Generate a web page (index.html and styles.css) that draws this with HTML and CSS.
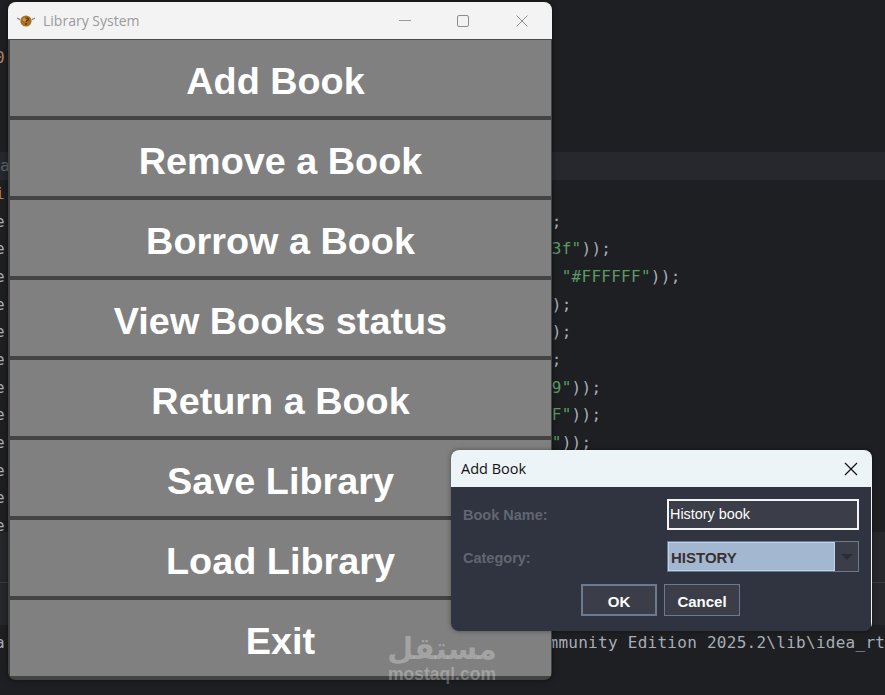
FILE: index.html
```html
<!DOCTYPE html>
<html lang="en">
<head>
<meta charset="utf-8">
<title>Library System</title>
<link rel="stylesheet" href="styles.css">
</head>
<body>
<div class="desktop">
  <div class="ide">
    <div class="editor">
      <div class="line"></div>
      <div class="line"></div>
      <div class="line"><span class="lead orange low">0</span></div>
      <div class="line"></div>
      <div class="line"></div>
      <div class="line"></div>
      <div class="line current"><span class="lead dim">a</span></div>
      <div class="line"><span class="lead orange">i</span></div>
      <div class="line"><span class="lead">e</span><span class="tail">;</span></div>
      <div class="line"><span class="lead">e</span><span class="tail"><span class="green">3f"</span>));</span></div>
      <div class="line"><span class="lead">e</span><span class="tail"> <span class="green">"#FFFFFF"</span>));</span></div>
      <div class="line"><span class="lead">e</span><span class="tail">);</span></div>
      <div class="line"><span class="lead">e</span><span class="tail">);</span></div>
      <div class="line"><span class="lead">e</span><span class="tail">;</span></div>
      <div class="line"><span class="lead">e</span><span class="tail"><span class="green">9"</span>));</span></div>
      <div class="line"><span class="lead">e</span><span class="tail"><span class="green">F"</span>));</span></div>
      <div class="line"><span class="lead">e</span><span class="tail"><span class="green">"</span>));</span></div>
      <div class="line"><span class="lead">e</span></div>
      <div class="line"><span class="lead">e</span></div>
      <div class="line"><span class="lead">e</span></div>
    </div>
    <div class="tool-header"></div>
    <div class="terminal">
      <div class="line"><span class="lead term-lead">a</span><span class="tail">mmunity Edition 2025.2\lib\idea_rt</span></div>
    </div>
  </div>

  <section class="window">
    <header class="titlebar">
      <svg class="app-icon" width="18" height="12" viewBox="0 0 18 12" aria-hidden="true">
        <path d="M0 3l3.2 1.6M18 3l-3.2 1.6" stroke="#8a8a8a" stroke-width="1.2" fill="none"/>
        <circle cx="9" cy="6" r="5.6" fill="#a8701f"/>
        <circle cx="7.4" cy="4.6" r="1.8" fill="#d1973c"/>
        <path d="M8.5 3.2h2.8v2.2h-1.6v1.6" stroke="#5a3208" stroke-width="1" fill="none"/>
        <circle cx="9" cy="9" r=".9" fill="#5a3208"/>
      </svg>
      <span class="window-title">Library System</span>
      <div class="controls">
        <span class="control">
          <svg width="12" height="12" viewBox="0 0 12 12" aria-hidden="true"><path d="M0 5.5h12" stroke="#999" fill="none"/></svg>
        </span>
        <span class="control">
          <svg width="12" height="12" viewBox="0 0 12 12" aria-hidden="true"><rect x=".5" y=".5" width="11" height="11" rx="1.5" stroke="#8e8e8e" fill="none"/></svg>
        </span>
        <span class="control">
          <svg width="12" height="12" viewBox="0 0 12 12" aria-hidden="true"><path d="M.5.5l11 11M11.5.5l-11 11" stroke="#8e8e8e" fill="none"/></svg>
        </span>
      </div>
    </header>
    <div class="menu">
      <button class="menu-btn shifted">Add Book</button>
      <button class="menu-btn">Remove a Book</button>
      <button class="menu-btn">Borrow a Book</button>
      <button class="menu-btn">View Books status</button>
      <button class="menu-btn">Return a Book</button>
      <button class="menu-btn">Save Library</button>
      <button class="menu-btn">Load Library</button>
      <button class="menu-btn">Exit</button>
    </div>
  </section>

  <div class="watermark">
    <span class="wm-ar" lang="ar" dir="rtl">مستقل</span>
    <span class="wm-en">mostaql.com</span>
  </div>

  <section class="dialog">
    <header class="dialog-title">
      <span>Add Book</span>
      <svg width="14" height="14" viewBox="0 0 14 14" aria-hidden="true"><path d="M1 1l12 12M13 1L1 13" stroke="#111" stroke-width="1.2" fill="none"/></svg>
    </header>
    <div class="dialog-body">
      <div class="form">
        <label class="label">Book Name:</label>
        <div class="field">History book</div>
        <label class="label label-low">Category:</label>
        <div class="combo">
          <span class="combo-value">HISTORY</span>
          <span class="combo-arrow"><i class="triangle"></i></span>
        </div>
      </div>
      <div class="actions">
        <button class="dlg-btn default">OK</button>
        <button class="dlg-btn">Cancel</button>
      </div>
    </div>
  </section>
</div>
</body>
</html>
```
FILE: styles.css
```css
* { box-sizing: border-box; }
html, body { margin: 0; padding: 0; }
body { background: #1e1f22; }

.desktop {
  position: relative;
  width: 885px;
  height: 695px;
  overflow: hidden;
  background: #1e1f22;
}

/* IDE behind the windows */
.ide {
  display: flex;
  flex-direction: column;
  height: 100%;
  font: 16px/27.7px "DejaVu Sans Mono", monospace;
  letter-spacing: .27px;
  color: #a9adb6;
}
.editor { margin-top: -14px; height: 546px; flex: none; }
.line { display: flex; height: 27.7px; margin-left: -5px; white-space: pre; }
.line.current { background: #26282e; margin-left: 0; }
.lead { flex: none; width: 556.8px; }
.term-lead { width: 553.5px; }
.low { padding-top: 3px; }
.tail { flex: none; }
.orange { color: #b5825f; }
.dim { color: #5f636b; }
.green { color: #5d9a66; }
.tool-header {
  flex: none;
  height: 93px;
  background: linear-gradient(#25272b 50px, #393b40 50px, #393b40 51px, #25272b 51px);
}
.terminal { flex: 1; padding-top: 4px; overflow: hidden; }

/* Library System window */
.window {
  position: absolute;
  left: 8px;
  top: 2px;
  width: 544px;
  height: 678px;
  display: flex;
  flex-direction: column;
  background: #434343;
  border-radius: 8px;
  overflow: hidden;
  box-shadow: 0 0 6px rgba(0, 0, 0, .45);
}
.titlebar {
  flex: none;
  height: 38px;
  display: flex;
  align-items: center;
  padding-left: 9px;
  background: #f3f3f3;
  border-bottom: 1px solid #4a4a4a;
}
.app-icon { flex: none; }
.window-title {
  margin-left: 8px;
  font: 14px "Open Sans", sans-serif;
  color: #9a9a9a;
}
.controls { display: flex; margin-left: auto; padding-right: 1px; }
.control { display: flex; width: 58.5px; height: 37px; align-items: center; justify-content: center; }
.menu {
  flex: 1;
  display: flex;
  flex-direction: column;
  gap: 4px;
  padding: 0 1px 4px 2px;
}
.menu-btn {
  flex: none;
  height: 76px;
  padding: 6px 0 0;
  border: 0;
  background: #808080;
  color: #fff;
  font: bold 37.8px "Liberation Sans", Arial, sans-serif;
}
.menu-btn.shifted { padding-right: 10px; }

/* Watermark */
.watermark {
  position: absolute;
  left: 386px;
  top: 632px;
  width: 112px;
  display: flex;
  flex-direction: column;
  align-items: center;
  color: rgba(255, 255, 255, .28);
  pointer-events: none;
}
.wm-ar { font: bold 30px/34px "DejaVu Sans", sans-serif; }
.wm-en { font: bold 17.5px/16px "Liberation Sans", sans-serif; }

/* Add Book dialog */
.dialog {
  position: absolute;
  left: 451px;
  top: 450px;
  width: 421px;
  height: 181px;
  display: flex;
  flex-direction: column;
  border-radius: 8px;
  overflow: hidden;
  background: #2f3440;
  box-shadow: 0 0 5px rgba(0, 0, 0, .4);
}
.dialog-title {
  flex: none;
  height: 37px;
  display: flex;
  align-items: center;
  justify-content: space-between;
  padding: 0 14px 0 10px;
  background: #edf4f8;
  color: #111;
  font: 14.5px "Open Sans", sans-serif;
}
.dialog-body {
  flex: 1;
  display: flex;
  flex-direction: column;
  gap: 12px;
  padding: 12px 13px 15px 12px;
  border-right: 1px solid #f2f2f2;
}
.form {
  display: grid;
  grid-template-columns: 204px 192px;
  grid-auto-rows: 31px;
  row-gap: 11px;
  align-items: center;
}
.label {
  font: bold 14.5px "Liberation Sans", sans-serif;
  color: #626670;
}
.label-low { padding-top: 2px; }
.field {
  height: 31px;
  padding-left: 1px;
  border: 2px solid #f4f4f4;
  background: #3b3e48;
  color: #fff;
  font: 14.4px/27px "Liberation Sans", sans-serif;
}
.combo {
  height: 31px;
  display: flex;
  border: 1px solid #6d7a8c;
  background: #3b3e48;
}
.combo-value {
  width: 167px;
  padding: 1px 0 0 2px;
  border: 1px solid #b9d3f0;
  background: #a3b8d0;
  color: #3b3030;
  font: bold 15px/27px "Liberation Sans", sans-serif;
}
.combo-arrow { flex: 1; display: flex; align-items: center; justify-content: center; }
.triangle {
  width: 0;
  height: 0;
  border-left: 6px solid transparent;
  border-right: 6px solid transparent;
  border-top: 6px solid #2a2d33;
}
.actions { display: flex; justify-content: center; gap: 7px; }
.dlg-btn {
  width: 76px;
  height: 32px;
  padding: 2px 0 0;
  border: 1px solid #6c7a8f;
  background: #3b3e48;
  color: #fff;
  font: bold 15px "Liberation Sans", sans-serif;
}
.dlg-btn.default { border-width: 2px; }
```
